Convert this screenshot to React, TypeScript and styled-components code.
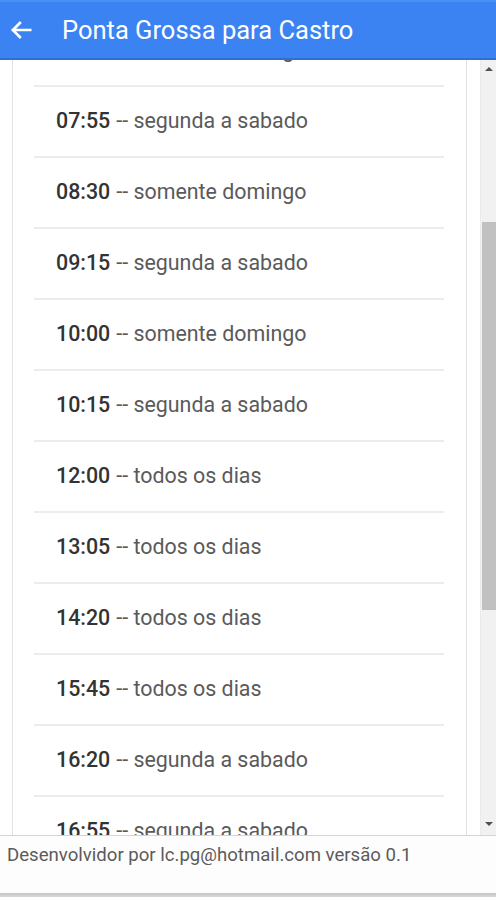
import React, { useLayoutEffect, useRef } from "react";
import styled, { createGlobalStyle } from "styled-components";

const Global = createGlobalStyle`
  html, body { margin: 0; padding: 0; background: #fff; }
  body { font-family: Roboto, "Noto Sans", Arial, sans-serif; }
  * { box-sizing: border-box; }
`;

const Page = styled.div`
  width: 496px;
  height: 900px;
  display: flex;
  flex-direction: column;
  overflow: hidden;
  background: #fff;
`;

const Header = styled.header`
  height: 60px;
  flex: none;
  display: flex;
  align-items: center;
  background: #3b83f3;
  border-top: 2px solid #4a8ff6;
  border-bottom: 2px solid #2f6fd6;
  color: #fff;
`;

const BackButton = styled.button`
  width: 48px;
  height: 44px;
  padding: 0 0 0 8px;
  border: 0;
  background: transparent;
  display: flex;
  align-items: center;
  color: #fff;
`;

const Title = styled.h1`
  margin: 0 0 0 14px;
  font-family: Roboto, Arial, sans-serif;
  font-weight: 400;
  font-size: 25.5px;
  color: #fff;
`;

const Middle = styled.div`
  flex: none;
  height: 775px;
  display: flex;
`;

const Scroller = styled.div`
  position: relative;
  flex: 1;
  overflow: hidden;
`;

const Card = styled.div`
  margin: 0 13px 0 12px;
  padding: 0 22px 20px 21px;
  border-left: 1px solid #e3e3e3;
  border-right: 1px solid #e3e3e3;
  background: #fff;
`;

const Row = styled.div`
  height: 71px;
  display: flex;
  align-items: center;
  padding: 0 0 3px 22px;
  border-bottom: 2px solid #ececec;
  font-size: 21.4px;
  color: #5a5a5a;
  white-space: nowrap;
`;

const Time = styled.span`
  font-weight: 500;
  color: #333;
  margin-right: 6px;
`;

const ScrollBar = styled.div`
  flex: none;
  width: 16px;
  background: #f1f1f1;
  border-left: 1px solid #ebebeb;
  display: flex;
  flex-direction: column;
  align-items: center;
`;

const Arrow = styled.div<{ $down?: boolean }>`
  width: 0;
  height: 0;
  margin: ${(p) => (p.$down ? "auto 0 9px" : "7px 0 0")};
  border-left: 4px solid transparent;
  border-right: 4px solid transparent;
  ${(p) => (p.$down ? "border-top: 4px solid #505050;" : "border-bottom: 4px solid #505050;")}
`;

const Thumb = styled.div`
  width: 15px;
  margin-left: 1px;
  background: #c1c1c1;
`;

const Footer = styled.footer`
  flex: none;
  height: 58px;
  border-top: 1px solid #d4d4d4;
  background: #fdfdfd;
  padding: 8px 0 0 7px;
  font-size: 18.6px;
  color: #5b5b5b;
`;

const BottomBar = styled.div`
  flex: none;
  height: 4px;
  background: linear-gradient(#c4c4c4, #d8d8d8);
`;

const rows: [string, string][] = [
  ["07:00", "somente domingo"],
  ["07:55", "segunda a sabado"],
  ["08:30", "somente domingo"],
  ["09:15", "segunda a sabado"],
  ["10:00", "somente domingo"],
  ["10:15", "segunda a sabado"],
  ["12:00", "todos os dias"],
  ["13:05", "todos os dias"],
  ["14:20", "todos os dias"],
  ["15:45", "todos os dias"],
  ["16:20", "segunda a sabado"],
  ["16:55", "segunda a sabado"],
];

const BackIcon = () => (
  <svg width="26" height="26" viewBox="0 0 24 24" fill="none">
    <path d="M20.5 12H4.5M11 5.5L4.5 12l6.5 6.5" stroke="#fff" strokeWidth="2.4" strokeLinecap="square" />
  </svg>
);

export default function App() {
  const scRef = useRef<HTMLDivElement>(null);
  const targetRef = useRef<HTMLDivElement>(null);

  useLayoutEffect(() => {
    if (scRef.current && targetRef.current) {
      scRef.current.scrollTop = targetRef.current.offsetTop - 27;
    }
  }, []);

  return (
    <Page>
      <Global />
      <Header>
        <BackButton aria-label="voltar">
          <BackIcon />
        </BackButton>
        <Title>Ponta Grossa para Castro</Title>
      </Header>
      <Middle>
        <Scroller ref={scRef}>
          <Card>
            {rows.map(([t, d]) => (
              <Row key={t} ref={t === "07:55" ? targetRef : undefined}>
                <Time>{t}</Time>-- {d}
              </Row>
            ))}
          </Card>
        </Scroller>
        <ScrollBar>
          <Arrow />
          <Thumb style={{ marginTop: 151, height: 388 }} />
          <Arrow $down />
        </ScrollBar>
      </Middle>
      <Footer>Desenvolvidor por lc.pg@hotmail.com versão 0.1</Footer>
      <BottomBar />
    </Page>
  );
}
